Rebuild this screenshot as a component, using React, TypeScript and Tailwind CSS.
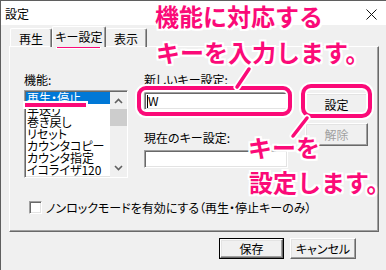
import type { ReactNode } from 'react';

const raised =
  'border border-t-white border-l-white border-r-[#696969] border-b-[#696969] shadow-[inset_-1px_-1px_0_#a0a0a0,inset_1px_1px_0_#e3e3e3] bg-[#f0f0f0]';
const sunken =
  'border border-t-[#a0a0a0] border-l-[#a0a0a0] border-r-white border-b-white shadow-[inset_1px_1px_0_#696969,inset_-1px_-1px_0_#e3e3e3] bg-white';

function Button({
  children,
  disabled,
  className = '',
}: {
  children: ReactNode;
  disabled?: boolean;
  className?: string;
}) {
  return (
    <div
      className={`flex items-center justify-center ${raised} ${disabled ? 'text-[#a0a0a0]' : ''} ${className}`}
    >
      {children}
    </div>
  );
}

function Note({ text, className }: { text: string; className: string }) {
  return (
    <div
      className={`absolute whitespace-nowrap text-[24px] leading-[24px] font-bold text-[#fb0a78] [font-feature-settings:normal] [text-shadow:2px_0_0_#fff,-2px_0_0_#fff,0_2px_0_#fff,0_-2px_0_#fff,2px_2px_0_#fff,-2px_-2px_0_#fff,2px_-2px_0_#fff,-2px_2px_0_#fff] ${className}`}
    >
      {text}
    </div>
  );
}

function Chevron({ down }: { down?: boolean }) {
  return (
    <svg width="9" height="6" viewBox="0 0 9 6">
      <polyline
        points={down ? '1,1 4.5,4.5 8,1' : '1,5 4.5,1.5 8,5'}
        fill="none"
        stroke="#606060"
        strokeWidth="1.6"
      />
    </svg>
  );
}

const functions = [
  '再生・停止',
  '早送り',
  '巻き戻し',
  'リセット',
  'カウンタコピー',
  'カウンタ指定',
  'イコライザ120',
];

export default function App() {
  return (
    <div className="relative h-[270px] w-[386px] overflow-hidden border-l border-t border-[#5f5f5f] bg-[#f0f0f0] text-[12px] leading-[16px] text-black font-['Noto_Sans_CJK_JP',sans-serif] [font-feature-settings:'palt']">
      {/* title bar */}
      <div className="flex h-[24px] items-center justify-between bg-white pl-[4px] pr-[9px] pt-[2px]">
        <span>設定</span>
        <svg width="11" height="11" viewBox="0 0 11 11" className="mt-[1px]">
          <path d="M0.5 0.5 L10.5 10.5 M10.5 0.5 L0.5 10.5" stroke="#111" strokeWidth="1" />
        </svg>
      </div>

      <div className="pl-[8px] pt-[1px]">
        {/* tabs */}
        <div className="flex h-[21px] items-end pl-[1px]">
          <div className="flex h-[19px] w-[42px] items-center justify-center rounded-t-[2px] border-l border-t border-r border-l-white border-t-white border-r-[#696969] pt-[1px] shadow-[inset_-1px_0_0_#a0a0a0]">
            再生
          </div>
          <div className="relative z-10 flex h-[21px] w-[54px] items-center justify-center rounded-t-[2px] border-l border-t border-r border-l-white border-t-white border-r-[#696969] bg-[#f0f0f0] pb-[1px] shadow-[inset_-1px_0_0_#a0a0a0]">
            キー設定
          </div>
          <div className="flex h-[19px] w-[41px] items-center justify-center rounded-t-[2px] border-t border-r border-t-white border-r-[#696969] pt-[1px] shadow-[inset_-1px_0_0_#a0a0a0]">
            表示
          </div>
        </div>

        {/* tab page */}
        <div className="-mt-px h-[186px] w-[370px] border border-t-white border-l-white border-r-[#696969] border-b-[#696969] pl-[14px] pt-[25px] shadow-[inset_-1px_-1px_0_#a0a0a0]">
          <div className="flex">
            <div className="w-[104px]">
              <div className="h-[16px]">機能:</div>
              <div className={`mt-[2px] flex h-[88px] pl-[1px] pt-[1px] ${sunken}`}>
                <div className="flex-1 overflow-hidden">
                  {functions.map((f, i) => (
                    <div
                      key={f}
                      className={`h-[12px] whitespace-nowrap pl-[1px] leading-[12px] ${i === 0 ? 'bg-[#0078d7] text-white' : ''}`}
                    >
                      {f}
                    </div>
                  ))}
                </div>
                <div className="flex w-[17px] flex-col bg-[#f0f0f0] pb-[1px]">
                  <div className="flex h-[17px] items-center justify-center">
                    <Chevron />
                  </div>
                  <div className="h-[17px] bg-[#cdcdcd]" />
                  <div className="flex-1" />
                  <div className="flex h-[17px] items-center justify-center">
                    <Chevron down />
                  </div>
                </div>
              </div>
            </div>

            <div className="ml-[16px] w-[144px]">
              <div className="h-[16px]">新しいキー設定:</div>
              <div className={`mt-[4px] flex h-[18px] items-center pl-[2px] ${sunken}`}>
                <span className="h-[13px] w-[1px] bg-black" />
                <span className="leading-[12px]">W</span>
              </div>
              <div className="mt-[20px] h-[16px]">現在のキー設定:</div>
              <div className={`mt-[4px] h-[18px] ${sunken}`} />
            </div>

            <div className="ml-[17px] w-[63px] pt-[21px]">
              <Button className="h-[23px]">設定</Button>
              <Button disabled className="mt-[7px] h-[23px]">
                解除
              </Button>
            </div>
          </div>

          <div className="ml-[5px] mt-[23px] flex h-[13px] items-center">
            <div className={`h-[13px] w-[13px] ${sunken}`} />
            <span className="ml-[4px] whitespace-nowrap">
              ノンロックモードを有効にする（再生・停止キーのみ）
            </span>
          </div>
        </div>
      </div>

      {/* dialog buttons */}
      <div className="mt-[6px] flex gap-[6px] pl-[218px]">
        <div className="h-[21px] w-[65px] border border-black">
          <Button className="h-full w-full">保存</Button>
        </div>
        <Button className="h-[21px] w-[66px]">キャンセル</Button>
      </div>

      {/* annotations */}
      <div className="pointer-events-none absolute -left-px -top-px h-[270px] w-[386px]">
        <div className="absolute left-[57px] top-[43px] h-[5px] w-[43px] bg-[#fb0a78] shadow-[0_0_0_1px_#fff]" />
        <div className="absolute left-[25px] top-[103px] h-[4px] w-[61px] bg-[#fb0a78] shadow-[0_0_0_2px_#fff]" />

        <div className="absolute left-[137px] top-[86px] h-[30px] w-[155px] rounded-[9px] border-[4px] border-[#fb0a78] shadow-[0_0_0_2px_#fff,inset_0_0_0_2px_#fff]" />
        <div className="absolute left-[301px] top-[84px] h-[34px] w-[71px] rounded-[10px] border-[4px] border-[#fb0a78] shadow-[0_0_0_2px_#fff,inset_0_0_0_2px_#fff]" />

        <svg className="absolute left-0 top-0" width="386" height="270" viewBox="0 0 386 270">
          <g strokeLinecap="round">
            <line x1="249" y1="69" x2="237" y2="87" stroke="#fff" strokeWidth="7" />
            <line x1="307" y1="118" x2="293" y2="136" stroke="#fff" strokeWidth="7" />
            <line x1="249" y1="69" x2="237" y2="87" stroke="#fb0a78" strokeWidth="3.5" />
            <line x1="307" y1="118" x2="293" y2="136" stroke="#fb0a78" strokeWidth="3.5" />
          </g>
        </svg>

        <Note text="機能に対応する" className="left-[155px] top-[4px]" />
        <Note text="キーを入力します。" className="left-[156px] top-[40px]" />
        <Note text="キーを" className="left-[248px] top-[135px]" />
        <Note text="設定します。" className="left-[249px] top-[170px]" />
      </div>
    </div>
  );
}
